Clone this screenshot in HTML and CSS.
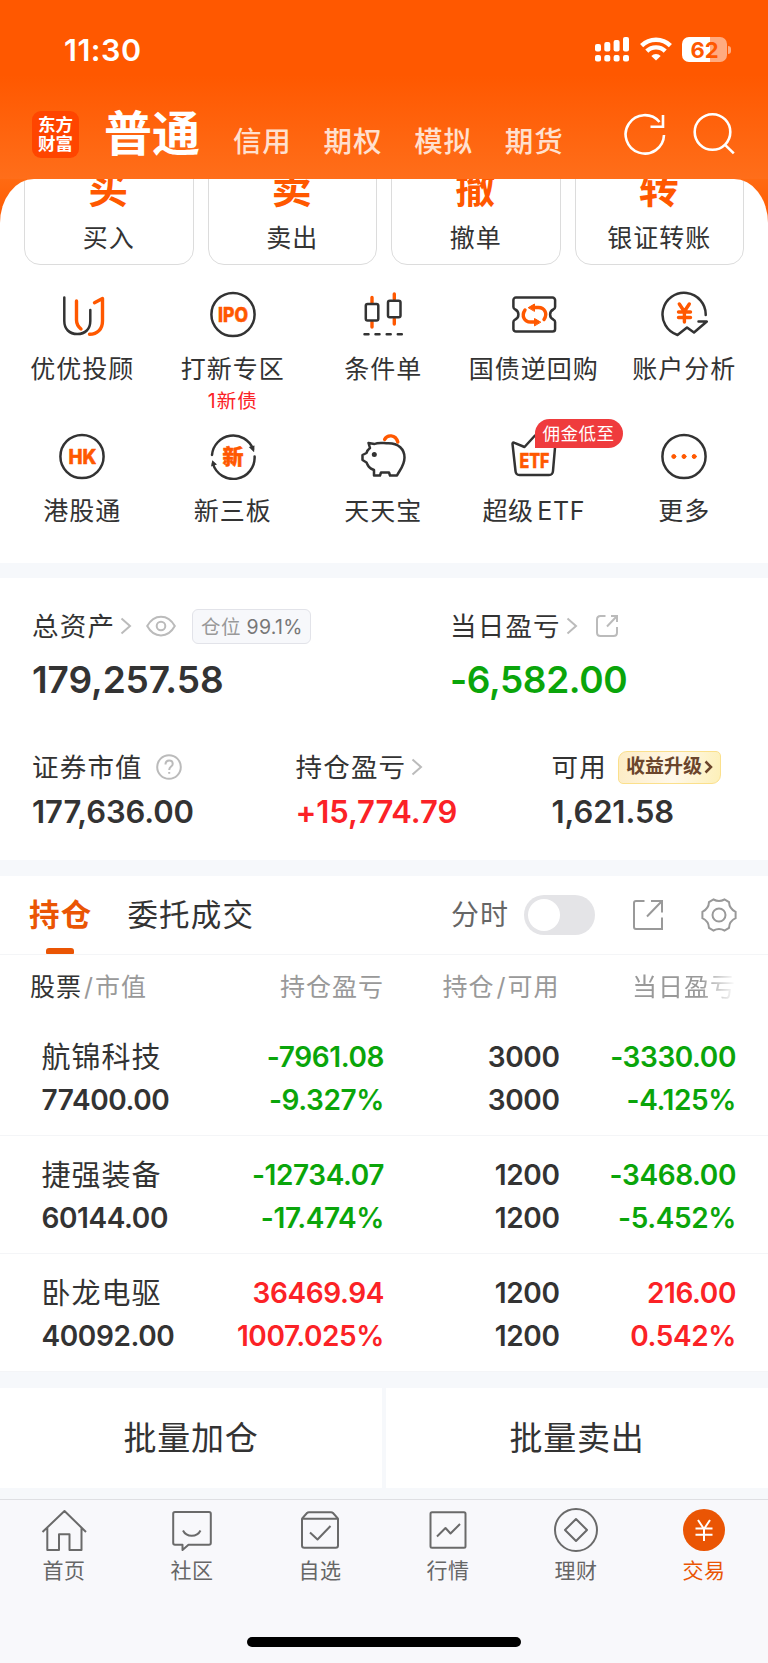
FILE: index.html
```
<!DOCTYPE html>
<html lang="zh-CN">
<head>
  <meta charset="UTF-8">
  <meta name="viewport" content="width=device-width, initial-scale=1.0">
  <title>交易</title>
  <link rel="stylesheet" href="styles.css">
</head>
<body>
  <header class="header">
    <div class="status-bar">
      <span class="time">11:30</span>
      <div class="status-icons">
        <svg class="signal" width="34" height="25" viewBox="0 0 34 25">
          <rect x="0" y="7" width="6" height="7.5" rx="2"/><rect x="9.3" y="5" width="6" height="9.5" rx="2"/><rect x="18.6" y="3" width="6" height="11.5" rx="2"/><rect x="28" y="0" width="6" height="14.5" rx="2"/>
          <rect x="0" y="18" width="6" height="6.5" rx="2"/><rect x="9.3" y="18" width="6" height="6.5" rx="2"/><rect x="18.6" y="18" width="6" height="6.5" rx="2"/><rect x="28" y="18" width="6" height="6.5" rx="2"/>
        </svg>
        <svg class="wifi" width="32" height="25" viewBox="0 0 32 25" stroke="#fff" stroke-width="4.4">
          <path d="M1.6 8.6a20.5 20.5 0 0 1 28.8 0"/>
          <path d="M6.8 14.1a13.2 13.2 0 0 1 18.4 0"/>
          <path d="M16 23.5l-4.7-4.6a6.7 6.7 0 0 1 9.4 0z" fill="#fff" stroke="none"/>
        </svg>
        <div class="battery"><span>62</span></div>
      </div>
    </div>
    <nav class="nav">
      <div class="logo"><span>东方</span><span>财富</span></div>
      <span class="nav-active">普通</span>
      <div class="nav-links">
        <span>信用</span>
        <span>期权</span>
        <span>模拟</span>
        <span>期货</span>
      </div>
      <svg class="refresh" width="44" height="44" viewBox="0 0 44 44" stroke="#fff" stroke-width="2.6">
        <path d="M41 23A19.2 19.2 0 1 1 36.5 10"/>
        <path d="M40 3v11.7H27.5"/>
      </svg>
      <svg class="search" width="44" height="44" viewBox="0 0 44 44" stroke="#fff" stroke-width="2.6">
        <circle cx="20.5" cy="20" r="17.8"/>
        <path d="M32.8 32.6l9 8.8"/>
      </svg>
    </nav>
  </header>

  <div class="sheet-bg">
    <section class="sheet">
      <div class="cards">
        <div class="card"><b>买</b><span>买入</span></div>
        <div class="card"><b>卖</b><span>卖出</span></div>
        <div class="card"><b>撤</b><span>撤单</span></div>
        <div class="card"><b>转</b><span>银证转账</span></div>
      </div>

      <div class="menu">
        <div class="menu-item">
          <svg class="icon" viewBox="0 0 48 48">
            <path d="M6.3 7.5V31c0 8 5 13 13 13s13-5 13-13V20"/>
            <path class="hot" d="M18.5 11v19c0 4 1.5 6.5 4.5 9"/>
            <path class="hot" d="M36.5 12.8L44.5 8.5V31c0 8-5 13.3-13 13.3"/>
          </svg>
          <span>优优投顾</span>
        </div>
        <div class="menu-item">
          <svg class="icon" viewBox="0 0 48 48">
            <circle cx="24" cy="24.5" r="21.6"/>
            <text x="24" y="31.5" font-size="19.5" textLength="30" lengthAdjust="spacingAndGlyphs">IPO</text>
          </svg>
          <span>打新专区</span>
          <em>1新债</em>
        </div>
        <div class="menu-item">
          <svg class="icon" viewBox="0 0 48 48">
            <path class="hot" d="M13 7.5v5M13 32v5M35.3 4v5M35.3 29v5"/>
            <rect x="6.8" y="14" width="12.5" height="16.5" rx="1.8"/>
            <rect x="29" y="10.7" width="12.5" height="16.5" rx="1.8"/>
            <path d="M5.5 44.3h4M16.5 44.3h4M27.7 44.3h4M38.8 44.3h4"/>
          </svg>
          <span>条件单</span>
        </div>
        <div class="menu-item">
          <svg class="icon" viewBox="0 0 48 48">
            <path d="M6 7.5H42.5a2.6 2.6 0 0 1 2.6 2.6V17q0 1.5-1.8 2.5a5.500 5.500 0 0 0 0 10q1.800 1 1.800 2.500v7a2.600 2.600 0 0 1-2.600 2.600H6a2.600 2.600 0 0 1-2.600-2.600v-7q0-1.500 1.800-2.500a5.500 5.500 0 0 0 0-10q-1.800-1-1.800-2.500v-6.900A2.600 2.600 0 0 1 6 7.500z"/>
            <path class="hot" d="M34 29.500c4-6 .5-12-5.500-12H22M15 20c-4 6-.5 12 5.500 12H27"/>
            <path class="hot-fill" d="M18.500 17.500l6-3.500v7zM30.500 32l-6-3.500v7z"/>
          </svg>
          <span>国债逆回购</span>
        </div>
        <div class="menu-item">
          <svg class="icon" viewBox="0 0 48 48">
            <path d="M45.700 25A21.600 21.600 0 1 0 17.500 45l9.500-7.500 7 5L46.800 31.500H38.500"/>
            <path class="hot" d="M19.300 14l5 7.500 5-7.500M18.500 22h12M18.500 27.500h12M24.400 22v10"/>
          </svg>
          <span>账户分析</span>
        </div>

        <div class="menu-item">
          <svg class="icon" viewBox="0 0 48 48">
            <circle cx="24" cy="24.500" r="21.600"/>
            <text x="24.500" y="31.500" font-size="20" textLength="28" lengthAdjust="spacingAndGlyphs">HK</text>
          </svg>
          <span>港股通</span>
        </div>
        <div class="menu-item">
          <svg class="icon" viewBox="0 0 48 48">
            <path d="M3 23A21.300 21.300 0 0 1 44 17M45.600 24.500A21.300 21.300 0 0 1 4 32"/>
            <path class="dark-fill" d="M39.800 15l5.700-1.500-.4 6.700zM2 34.500l1.300-6.300 4.700 4.300z"/>
            <text x="24" y="31.500" font-size="21">新</text>
          </svg>
          <span>新三板</span>
        </div>
        <div class="menu-item">
          <svg class="icon" viewBox="0 0 48 48">
            <path class="hot" d="M25.600 7.500C28 2.500 36.500 2 38.800 10"/>
            <path d="M9.500 11l6 1c4-2 8-.8 14-.8 10 0 16 6 16 14.300 0 8-4.500 12-7.500 18h-7l-1-3h-8l-1 3h-6v-5.500C10 36 9 34 7.500 30.500L3.500 28v-5l4-2c.5-2 1.500-3.500 3.500-5z"/>
            <circle class="dark-fill" cx="15.300" cy="22.500" r="2.500"/>
          </svg>
          <span>天天宝</span>
        </div>
        <div class="menu-item">
          <svg class="icon" viewBox="0 0 48 48">
            <path d="M2.500 11.800q0-2 2-1L14.500 15 25 3.500 36 13l7-2.500q2.500-.5 2.300 1.700L43 39q-.3 4-4 4H9.500q-3.700 0-4-4z"/>
            <text x="24.500" y="36" font-size="20" textLength="30" lengthAdjust="spacingAndGlyphs">ETF</text>
          </svg>
          <i class="badge">佣金低至</i>
          <span class="etf">超级 ETF</span>
        </div>
        <div class="menu-item">
          <svg class="icon" viewBox="0 0 48 48">
            <circle cx="24" cy="24.500" r="21.600"/>
            <g class="hot-fill"><circle cx="13.800" cy="24.500" r="2"/><circle cx="24" cy="24.500" r="2"/><circle cx="34.200" cy="24.500" r="2"/></g>
          </svg>
          <span>更多</span>
        </div>
      </div>
    </section>
  </div>

  <section class="assets">
    <div class="assets-total">
      <div class="asset">
        <div class="asset-label">
          <span>总资产</span>
          <svg class="chevron" width="12" height="18" viewBox="0 0 12 18"><path d="M1.500 1.500l8.500 7.500-8.500 7.500"/></svg>
          <svg class="eye" width="30" height="22" viewBox="0 0 30 22"><path d="M1.200 11C8-1.500 22-1.500 28.800 11 22 23.500 8 23.500 1.200 11z"/><circle cx="15" cy="11" r="4.300"/></svg>
          <div class="ratio">仓位 <b>99.1%</b></div>
        </div>
        <div class="asset-value big">179,257.58</div>
      </div>
      <div class="asset">
        <div class="asset-label">
          <span>当日盈亏</span>
          <svg class="chevron" width="12" height="18" viewBox="0 0 12 18"><path d="M1.500 1.500l8.500 7.500-8.500 7.500"/></svg>
          <svg class="share-small" width="24" height="24" viewBox="0 0 24 24"><path d="M10.500 2H5.500Q2 2 2 5.500v13Q2 22 5.500 22h13q3.500 0 3.500-3.500V13M16 2h6v6M22 2L12 12.500"/></svg>
        </div>
        <div class="asset-value big green">-6,582.00</div>
      </div>
    </div>
    <div class="assets-detail">
      <div class="asset">
        <div class="asset-label">
          <span>证券市值</span>
          <svg class="help" width="26" height="26" viewBox="0 0 26 26"><circle cx="13" cy="13" r="11.800"/><path d="M9.500 10.500q0-4 3.600-4t3.600 3.400c0 2.700-3.500 2.700-3.500 6M13.200 18v1.800"/></svg>
        </div>
        <div class="asset-value">177,636.00</div>
      </div>
      <div class="asset">
        <div class="asset-label">
          <span>持仓盈亏</span>
          <svg class="chevron" width="12" height="18" viewBox="0 0 12 18"><path d="M1.500 1.500l8.500 7.500-8.500 7.500"/></svg>
        </div>
        <div class="asset-value red">+15,774.79</div>
      </div>
      <div class="asset">
        <div class="asset-label">
          <span>可用</span>
          <div class="upgrade">收益升级<svg width="9" height="14" viewBox="0 0 9 14"><path d="M1.500 1.500L7 7l-5.500 5.500"/></svg></div>
        </div>
        <div class="asset-value">1,621.58</div>
      </div>
    </div>
  </section>

  <section class="holdings">
    <div class="tabs">
      <span class="tab active">持仓</span>
      <span class="tab">委托成交</span>
      <span class="minute">分时</span>
      <div class="toggle"></div>
      <svg class="share" width="32" height="32" viewBox="0 0 32 32"><path d="M12.500 2H4Q2 2 2 4v24q0 2 2 2h26V18.500M19 2h11v11.500M29.500 2.500L15 17.500"/></svg>
      <svg class="gear" width="38" height="38" viewBox="0 0 38 38"><path d="M13.500 3.500q5.500 3 11 0l4.500 2.600q.3 6.600 6.600 9.700v6.400q-6.300 3.100-6.600 9.700l-4.500 2.600q-5.500-3-11 0L9 31.900q-.3-6.600-6.600-9.700v-6.400Q8.700 12.700 9 6.100z"/><circle cx="19" cy="19" r="6.500"/></svg>
    </div>
    <div class="row table-head">
      <span><b>股票</b><i>/</i>市值</span>
      <span>持仓盈亏</span>
      <span>持仓<i>/</i>可用</span>
      <span class="fade">当日盈亏</span>
    </div>
    <div class="row stock">
      <div><span class="name">航锦科技</span><span>77400.00</span></div>
      <div class="green"><span>-7961.08</span><span>-9.327%</span></div>
      <div><span>3000</span><span>3000</span></div>
      <div class="green"><span>-3330.00</span><span>-4.125%</span></div>
    </div>
    <div class="row stock">
      <div><span class="name">捷强装备</span><span>60144.00</span></div>
      <div class="green"><span>-12734.07</span><span>-17.474%</span></div>
      <div><span>1200</span><span>1200</span></div>
      <div class="green"><span>-3468.00</span><span>-5.452%</span></div>
    </div>
    <div class="row stock">
      <div><span class="name">卧龙电驱</span><span>40092.00</span></div>
      <div class="red"><span>36469.94</span><span>1007.025%</span></div>
      <div><span>1200</span><span>1200</span></div>
      <div class="red"><span>216.00</span><span>0.542%</span></div>
    </div>
  </section>

  <div class="batch">
    <div class="batch-btn">批量加仓</div>
    <div class="batch-btn">批量卖出</div>
  </div>

  <footer class="tabbar">
    <div class="tabbar-items">
      <div class="tabbar-item">
        <svg viewBox="0 0 48 48"><path d="M2.500 26L24.500 5l21.500 21M7.300 22v22H19V28.200h10.500V44h12V22"/></svg>
        <span>首页</span>
      </div>
      <div class="tabbar-item">
        <svg viewBox="0 0 48 48"><path d="M7 6h34q1.800 0 1.800 1.800V37q0 1.800-1.800 1.800H20.500L14.500 44v-5.200H7q-1.800 0-1.800-1.800V7.800Q5.200 6 7 6z"/><path d="M15 24.500c3.500 7 14 7 17.500 0"/></svg>
        <span>社区</span>
      </div>
      <div class="tabbar-item">
        <svg viewBox="0 0 48 48"><path d="M6 12.700h36V39.500q0 2.300-2.300 2.300H8.300Q6 41.800 6 39.500zM6 12.700L11 7q.8-.8 2-.8h22q1.200 0 2 .8l5 5.700M14 26.500l7.500 7L34.500 20"/></svg>
        <span>自选</span>
      </div>
      <div class="tabbar-item">
        <svg viewBox="0 0 48 48"><rect x="6.500" y="6.200" width="35" height="35.600" rx="1.500"/><path d="M13 30.500l8.500-8.500 5 5.500 9.500-9.500"/></svg>
        <span>行情</span>
      </div>
      <div class="tabbar-item">
        <svg viewBox="0 0 48 48"><circle cx="24" cy="24" r="21"/><path d="M24 13l11 11-11 11-11-11z"/></svg>
        <span>理财</span>
      </div>
      <div class="tabbar-item current">
        <svg viewBox="0 0 48 48"><circle class="disc" cx="24" cy="24" r="21"/><path class="yen" d="M18 14l6 9 6-9M15.500 22.500h17M15.500 28.800h17M24 22.500V35"/></svg>
        <span>交易</span>
      </div>
    </div>
    <div class="home-indicator"></div>
  </footer>
</body>
</html>
```

FILE: styles.css
```
* {
  box-sizing: border-box;
}
body {
  margin: 0;
  width: 768px;
  background: #f6f8fb;
  color: #333;
  font-family: Inter, "Noto Sans CJK SC", sans-serif;
}
svg {
  flex: none;
  fill: none;
}
.green {
  color: #0aa50a;
}
.red {
  color: #fb2226;
}

/* header */
.header {
  height: 179px;
  background: linear-gradient(#ff5800 75px, #ff6e1a 179px);
  color: #fff;
}
.status-bar {
  display: flex;
  justify-content: space-between;
  align-items: center;
  height: 98px;
  padding: 0 41px 0 64px;
}
.time {
  font-size: 30.5px;
  font-weight: 600;
  letter-spacing: .5px;
}
.status-icons {
  display: flex;
  align-items: center;
}
.signal {
  fill: #fff;
}
.wifi {
  margin: 0 10px 0 11px;
}
.battery {
  position: relative;
  width: 45px;
  height: 25px;
  border-radius: 7px;
  background: linear-gradient(90deg, #fff 62%, #ffab80 62%);
  color: #ff5800;
  font-size: 22px;
  font-weight: 700;
  line-height: 26px;
  text-align: center;
}
.battery::after {
  content: "";
  position: absolute;
  right: -4px;
  top: 9px;
  width: 3px;
  height: 8px;
  border-radius: 0 3px 3px 0;
  background: #ffab80;
}
.nav {
  display: flex;
  align-items: center;
  height: 72px;
  padding-left: 32px;
}
.logo {
  display: flex;
  flex-direction: column;
  justify-content: center;
  width: 47px;
  height: 47px;
  border-radius: 9px;
  background: #ff4500;
  font-size: 17.5px;
  font-weight: 700;
  line-height: 19.5px;
  text-align: center;
}
.nav-active {
  margin-left: 25px;
  width: 104px;
  font-size: 48px;
  font-weight: 700;
  line-height: 70px;
}
.nav-links {
  display: flex;
  gap: 32px;
  margin-left: 25px;
  padding-top: 15px;
  color: #ffe0cf;
  font-size: 28.5px;
  font-weight: 500;
  letter-spacing: .8px;
  line-height: 30px;
  white-space: nowrap;
}
.refresh {
  margin-left: auto;
}
.search {
  margin: 0 32px 0 25px;
}

/* rounded sheet with trade cards and menu */
.sheet-bg {
  background: linear-gradient(#ff6a12, #ff5a00 45px, #fff 45px);
}
.sheet {
  height: 384px;
  overflow: hidden;
  border-radius: 34px 34px 0 0 / 44px 44px 0 0;
  background: #fff;
}
.cards {
  display: grid;
  grid-template-columns: repeat(4, 1fr);
  gap: 14px;
  margin: -20px 24px 0;
}
.card {
  display: flex;
  flex-direction: column;
  align-items: center;
  height: 106px;
  border: 1.5px solid #dcdcdc;
  border-radius: 16px;
}
.card b {
  margin: 4px 1px 0 0;
  color: #ff5800;
  font-size: 40px;
  line-height: 50px;
}
.card span {
  margin-top: 11px;
  font-size: 25px;
  letter-spacing: 1px;
  line-height: 26px;
}
.menu {
  display: grid;
  grid-template-columns: repeat(5, 150.5px);
  grid-auto-rows: 142px;
  padding: 25px 8px 0 7px;
}
.menu-item {
  position: relative;
  display: flex;
  flex-direction: column;
  align-items: center;
  font-size: 25px;
  letter-spacing: 1px;
  white-space: nowrap;
}
.icon {
  width: 48px;
  height: 48px;
  stroke: #333;
  stroke-width: 2.5;
  stroke-linecap: round;
  stroke-linejoin: round;
}
.icon .hot {
  stroke: #ff5800;
  stroke-width: 3.4;
}
.icon .hot-fill {
  fill: #ff5800;
  stroke: #ff5800;
  stroke-width: 1;
}
.icon .dark-fill {
  fill: #333;
  stroke: none;
}
.icon text {
  fill: #ff5800;
  stroke: #ff5800;
  stroke-width: .5;
  font-weight: 800;
  letter-spacing: 0;
  text-anchor: middle;
}
.menu-item span {
  margin-top: 16px;
  line-height: 30px;
}
.menu-item .etf {
  letter-spacing: .6px;
  word-spacing: -4px;
}
.menu-item em {
  color: #fb2226;
  font-size: 19.5px;
  font-style: normal;
  line-height: 34px;
}
.badge {
  position: absolute;
  left: 76px;
  top: -13px;
  width: 88px;
  height: 29px;
  border-radius: 15px 15px 15px 0;
  background: #ef3b3d;
  color: #fff;
  font-size: 17.5px;
  font-style: normal;
  letter-spacing: .5px;
  line-height: 29px;
  text-align: center;
}

/* assets */
.assets {
  height: 282px;
  margin-top: 15px;
  padding: 28px 0 0 32px;
  background: #fff;
}
.assets-total {
  display: grid;
  grid-template-columns: 418px 1fr;
  height: 141px;
}
.assets-detail {
  display: grid;
  grid-template-columns: 263.5px 256px 1fr;
}
.asset-label {
  display: flex;
  align-items: center;
  height: 40px;
  font-size: 26.5px;
  letter-spacing: 1.2px;
}
.asset-label span {
  line-height: 40px;
}
.asset-label svg {
  stroke: #bbb;
  stroke-width: 2;
}
.asset-value {
  margin-top: 6px;
  font-size: 31px;
  font-weight: 600;
  letter-spacing: -.1px;
  line-height: 38px;
}
.asset-value.big {
  margin-top: 10px;
  font-size: 37px;
  line-height: 48px;
}
.asset-value.big.green {
  letter-spacing: -.4px;
}
.chevron {
  margin-left: 5px;
}
.asset-label .eye {
  margin: 0 16px 0 14px;
}
.ratio {
  height: 35px;
  padding: 0 7px 0 8px;
  border: 1.5px solid #e2e3e9;
  border-radius: 6px;
  background: #f7f8fb;
  color: #999;
  font-size: 19.5px;
  letter-spacing: .3px;
  line-height: 34px;
}
.ratio b {
  color: #777;
  font-weight: 400;
}
.share-small {
  margin-left: 17px;
}
.help {
  margin-left: 13px;
}
.upgrade {
  display: flex;
  align-items: center;
  gap: 2px;
  width: 103px;
  height: 33px;
  margin-left: 11px;
  padding-left: 7px;
  border: 1.5px solid #fbe08c;
  border-radius: 9px 5px 9px 5px;
  background: linear-gradient(100deg, #fdecc4, #fff8ea 55%, #fdf0b8);
  color: #6b452c;
  font-size: 19px;
  font-weight: 700;
  letter-spacing: 0;
  line-height: 30px;
  white-space: nowrap;
}
.asset-label .upgrade svg {
  stroke: #6b452c;
  stroke-width: 2.5;
}

/* holdings */
.holdings {
  margin-top: 16px;
  background: #fff;
}
.tabs {
  display: flex;
  align-items: center;
  height: 79px;
  padding: 0 30px 0 29px;
  border-bottom: 1.5px solid #f4f5f7;
  font-size: 30.5px;
  line-height: 44px;
}
.tab {
  margin-right: 35px;
  letter-spacing: 1.2px;
}
.tab.active {
  position: relative;
  color: #ea5504;
  font-weight: 700;
}
.tab.active::after {
  content: "";
  position: absolute;
  left: 17px;
  bottom: -17px;
  width: 28px;
  height: 6px;
  border-radius: 3px 3px 1px 1px;
  background: #ea5504;
}
.minute {
  margin-left: auto;
  color: #666;
  font-size: 28px;
  letter-spacing: 1px;
}
.toggle {
  width: 71px;
  height: 40px;
  margin: 0 37px 0 15px;
  padding: 4px;
  border-radius: 20px;
  background: #e4e4e7;
}
.toggle::before {
  content: "";
  display: block;
  width: 32px;
  height: 32px;
  border-radius: 50%;
  background: #fff;
}
.share,
.gear {
  stroke: #999;
  stroke-width: 2;
}
.gear {
  margin-left: 36px;
}
.row {
  display: grid;
  grid-template-columns: 204px 151px 175.5px 176.5px;
  padding-left: 29px;
  text-align: right;
}
.row > :first-child {
  text-align: left;
}
.table-head {
  height: 63px;
  color: #999;
  font-size: 25px;
  letter-spacing: 1px;
  line-height: 64px;
}
.table-head > :first-child {
  padding-left: 1px;
}
.table-head b {
  color: #333;
  font-weight: 400;
}
.table-head i {
  margin: 0 1px 0 2px;
  font-style: normal;
}
.fade {
  -webkit-mask-image: linear-gradient(90deg, #000 80%, transparent);
  mask-image: linear-gradient(90deg, #000 80%, transparent);
}
.stock {
  height: 118px;
  padding-top: 18px;
  border-bottom: 1.5px solid #f4f5f7;
  font-size: 28px;
  font-weight: 600;
  letter-spacing: -.4px;
}
.stock span {
  display: block;
  height: 43px;
  line-height: 43px;
}
.stock > :first-child {
  padding-left: 12.5px;
}
.stock .name {
  font-size: 29px;
  font-weight: 400;
  letter-spacing: 1px;
}

/* batch buttons */
.batch {
  display: grid;
  grid-template-columns: 1fr 1fr;
  gap: 4px;
  height: 99px;
  margin-top: 16px;
}
.batch-btn {
  background: #fff;
  font-size: 33px;
  letter-spacing: .8px;
  line-height: 100px;
  text-align: center;
}

/* bottom bar */
.tabbar {
  height: 165px;
  margin-top: 12px;
  border-top: 1.5px solid #dedfe3;
  background: #f8f8fb;
}
.tabbar-items {
  display: grid;
  grid-template-columns: repeat(6, 1fr);
  height: 137px;
  padding-top: 6px;
}
.tabbar-item {
  display: flex;
  flex-direction: column;
  align-items: center;
  color: #666;
  font-size: 21px;
  letter-spacing: .5px;
  line-height: 34px;
}
.tabbar-item svg {
  width: 48px;
  height: 48px;
  margin-right: 1px;
  stroke: #6a6a6a;
  stroke-width: 2;
  stroke-linejoin: round;
}
.tabbar-item.current {
  color: #ea5504;
}
.tabbar-item .disc {
  fill: #ea5504;
  stroke: none;
}
.tabbar-item .yen {
  stroke: #fff;
}
.home-indicator {
  width: 274px;
  height: 10px;
  margin: 0 auto;
  border-radius: 5px;
  background: #000;
}
```
